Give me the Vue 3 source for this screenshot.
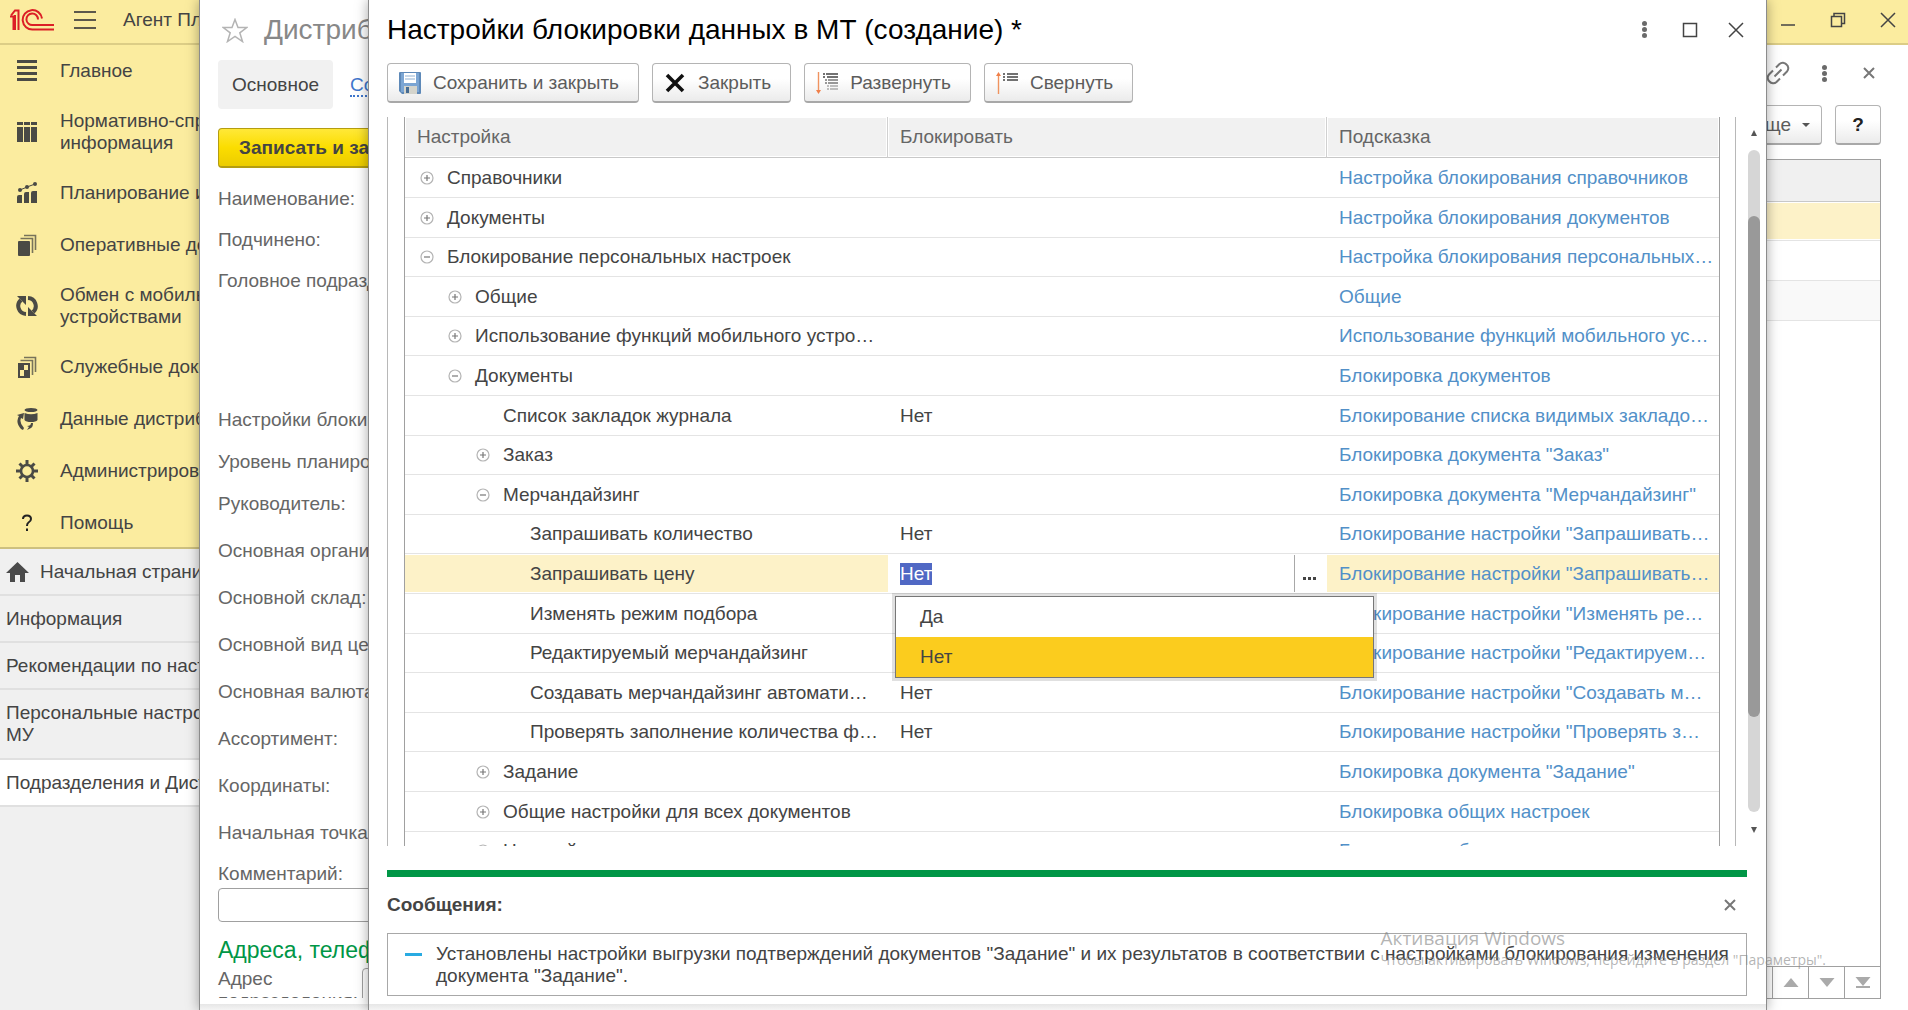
<template>
  <div class="app">
    <header class="titlebar">
      <svg class="logo" viewBox="0 0 44 22" fill="none" stroke="#dc1f26" stroke-width="2">
        <path d="M0 7.500H3.500V21" />
        <path d="M1 6.500L5 1.500H8.500V21M5 21V6" />
        <path d="M32 9.500A9.700 9.700 0 1 0 23 20.500H44" />
        <path d="M28 10.500A5.800 5.800 0 1 0 23 16H44" />
      </svg>
      <button class="burger" aria-label="Меню"><i></i><i></i><i></i></button>
      <span class="app-name">Агент Плюс</span>
      <div class="titlebar-actions">
        <button aria-label="Свернуть окно">
          <svg viewBox="0 0 16 16"><path d="M1 13H15" /></svg>
        </button>
        <button aria-label="Восстановить">
          <svg viewBox="0 0 16 16"><path d="M1.500 4.500H11.500V14.500H1.500ZM4 4V1.500H14.500V11.500H12" /></svg>
        </button>
        <button aria-label="Закрыть приложение">
          <svg viewBox="0 0 16 16"><path d="M1 1L15 15M15 1L1 15" /></svg>
        </button>
      </div>
    </header>

    <div class="workspace">
      <aside class="sidebar">
        <nav class="sections">
          <a v-for="item in sections" :key="item.label" href="#" class="section" :class="{ double: item.double }">
            <svg viewBox="0 0 22 22" class="section-icon" v-html="item.icon"></svg>
            <span>{{ item.label }}</span>
          </a>
        </nav>
        <nav class="open-tabs">
          <a v-for="tab in openTabs" :key="tab.label" href="#" class="open-tab" :class="{ double: tab.double, active: tab.active }">
            <svg v-if="tab.home" viewBox="0 0 23 20" class="home-icon">
              <path d="M11.500 0L23 11H19V20H14V13H9V20H4V11H0Z" />
            </svg>
            <span>{{ tab.label }}</span>
          </a>
        </nav>
      </aside>

      <main class="list-form">
        <div class="list-head">
          <button aria-label="Получить ссылку">
            <svg viewBox="0 0 24 24" class="link-icon">
              <path d="M10 6.500L13.500 3A4.800 4.800 0 0 1 20.500 3.500A4.800 4.800 0 0 1 21 10.500L17 14.500M14 17.500L10.500 21A4.800 4.800 0 0 1 3.500 20.500A4.800 4.800 0 0 1 3 13.500L7 9.500M8.500 15.500L15.500 8.500" />
            </svg>
          </button>
          <button class="dots" aria-label="Дополнительно"><i></i><i></i><i></i></button>
          <button class="close-list" aria-label="Закрыть список">
            <svg viewBox="0 0 12 12" class="small-x"><path d="M1 1L11 11M11 1L1 11" /></svg>
          </button>
        </div>
        <div class="list-tools">
          <button class="btn more">Еще <i class="caret"></i></button>
          <button class="btn help">?</button>
        </div>
        <div class="list-box">
          <div class="list-row list-row-head"></div>
          <div class="list-row current"></div>
          <div class="list-row"></div>
          <div class="list-row even"></div>
        </div>
        <div class="list-nav">
          <button aria-label="Вверх"><svg viewBox="0 0 16 12"><path d="M8 1L15.500 10H0.500Z" /></svg></button>
          <button aria-label="Вниз"><svg viewBox="0 0 16 12"><path d="M8 10L15.500 1H0.500Z" /></svg></button>
          <button aria-label="В конец"><svg viewBox="0 0 16 12"><path d="M8 9L15.500 0H0.500ZM1 9H15V11H1Z" /></svg></button>
        </div>
      </main>
    </div>

    <section class="window element-form">
      <div class="element-body">
        <div class="element-title">
          <svg viewBox="0 0 26 25" class="star">
            <path d="M13 1.500L16 9.500H24.800L17.800 14.800L20.500 23.500L13 18.300L5.500 23.500L8.200 14.800L1.200 9.500H10Z" />
          </svg>
          <h2>Дистрибьютор</h2>
        </div>
        <div class="element-tabs">
          <a href="#" class="element-tab active">Основное</a>
          <a href="#" class="element-tab"><span>Согласования</span></a>
        </div>
        <button class="btn-primary">Записать и закрыть</button>
        <div class="labels short">
          <span v-for="label in headLabels" :key="label">{{ label }}</span>
        </div>
        <div class="labels medium">
          <span v-for="label in settingLabels" :key="label">{{ label }}</span>
        </div>
        <div class="labels tall">
          <span v-for="label in mainLabels" :key="label">{{ label }}</span>
        </div>
        <label class="comment-label" for="comment">Комментарий:</label>
        <input id="comment" class="field" type="text" />
        <h3>Адреса, телефоны</h3>
        <div class="address">
          <label for="address">Адрес подразделения:</label>
          <input id="address" class="field" type="text" />
        </div>
      </div>
    </section>

    <section class="window dialog" role="dialog" aria-labelledby="dialog-title">
      <div class="dialog-head">
        <h1 id="dialog-title">Настройки блокировки данных в МТ (создание) *</h1>
        <div class="dialog-actions">
          <button class="dots" aria-label="Еще действия"><i></i><i></i><i></i></button>
          <button aria-label="Развернуть окно">
            <svg viewBox="0 0 16 16"><path d="M1.500 1.500H14.500V14.500H1.500Z" /></svg>
          </button>
          <button aria-label="Закрыть окно">
            <svg viewBox="0 0 16 16"><path d="M1 1L15 15M15 1L1 15" /></svg>
          </button>
        </div>
      </div>

      <div class="toolbar">
        <button v-for="cmd in commands" :key="cmd.label" class="btn command">
          <svg viewBox="0 0 22 22" v-html="cmd.icon"></svg>
          <span>{{ cmd.label }}</span>
        </button>
      </div>

      <div class="scroll-area">
        <div class="frame">
          <table class="tree">
            <colgroup>
              <col class="col-name" />
              <col class="col-value" />
              <col />
            </colgroup>
            <thead>
              <tr>
                <th>Настройка</th>
                <th>Блокировать</th>
                <th>Подсказка</th>
              </tr>
            </thead>
            <tbody>
              <tr v-for="(row, index) in rows" :key="index" :class="{ selected: row.editing }">
                <td>
                  <div class="name" :class="'level-' + row.level">
                    <button v-if="row.toggle" class="toggle" :aria-label="row.name">
                      <svg viewBox="0 0 14 14">
                        <circle cx="7" cy="7" r="6" />
                        <path :d="row.toggle === 'plus' ? 'M4 7H10M7 4V10' : 'M4 7H10'" />
                      </svg>
                    </button>
                    <span>{{ row.name }}</span>
                  </div>
                </td>
                <td v-if="row.editing" class="editing">
                  <div class="editor">
                    <input ref="valueInput" v-model="row.value" type="text" aria-label="Блокировать" />
                    <button class="choose" aria-label="Выбрать"><i></i><i></i><i></i></button>
                  </div>
                  <ul class="options" role="listbox">
                    <li v-for="option in options" :key="option" role="option" :class="{ chosen: option === row.value }">
                      {{ option }}
                    </li>
                  </ul>
                </td>
                <td v-else>{{ row.value }}</td>
                <td><a href="#">{{ row.hint }}</a></td>
              </tr>
            </tbody>
          </table>
        </div>
        <div class="scrollbar">
          <i class="arrow up"></i>
          <div class="track"><div class="thumb"></div></div>
          <i class="arrow down"></i>
        </div>
      </div>

      <div class="messages">
        <div class="messages-head">
          <strong>Сообщения:</strong>
          <button aria-label="Закрыть сообщения">
            <svg viewBox="0 0 12 12" class="small-x"><path d="M1 1L11 11M11 1L1 11" /></svg>
          </button>
        </div>
        <div class="message">
          <i class="dash"></i>
          <p>
            Установлены настройки выгрузки подтверждений документов "Задание" и их результатов в соответствии с настройками блокирования изменения документа "Задание".
          </p>
        </div>
      </div>
    </section>

    <div class="watermark">
      <p class="watermark-title">Активация Windows</p>
      <p>Чтобы активировать Windows, перейдите в раздел "Параметры".</p>
    </div>
  </div>
</template>

<script setup>
import { onMounted, ref } from 'vue'

const sections = [
  {
    label: 'Главное',
    icon: '<path d="M1 0H21V3H1ZM1 6H21V9H1ZM1 12H21V15H1ZM1 18H21V21H1Z"/>'
  },
  {
    label: 'Нормативно-справочная\nинформация',
    double: true,
    icon: '<path d="M1 1H7V4H1ZM8 1H14V4H8ZM15 1H21V4H15ZM1 6H7V21H1ZM8 6H14V21H8ZM15 6H21V21H15Z"/>'
  },
  {
    label: 'Планирование и анализ',
    icon: '<path d="M1 15Q1 13 3 13H6V21H1ZM8 12Q8 10 10 10H13V21H8ZM15 11Q15 9 17 9H21V21H15Z"/><circle cx="4" cy="8" r="2"/><circle cx="11" cy="5" r="2"/><circle cx="19" cy="2" r="2"/><path d="M4 8L11 5L19 2" stroke="#4a4a45" stroke-width="1"/>'
  },
  {
    label: 'Оперативные документы',
    icon: '<rect x="2" y="7" width="12" height="15" rx="1"/><path d="M4.500 4.500H16.500V19M8 1.500H19.500V16" fill="none" stroke="#77735a" stroke-width="1.600"/>'
  },
  {
    label: 'Обмен с мобильными\nустройствами',
    double: true,
    icon: '<g fill="none" stroke="#4a4a45" stroke-width="4"><path d="M10 19A8 8 0 0 1 5 5"/><path d="M12 3A8 8 0 0 1 17 17"/></g><path d="M1 1H10V10ZM21 21H12V12Z"/>'
  },
  {
    label: 'Служебные документы',
    icon: '<path d="M2 7H14V22H2ZM8 9V14H12V9ZM4 14V20H8V14Z" fill-rule="evenodd"/><path d="M4.500 4.500H16.500V19M8 1.500H19.500V16" fill="none" stroke="#77735a" stroke-width="1.600"/>'
  },
  {
    label: 'Данные дистрибьюторов',
    icon: '<ellipse cx="15" cy="2" rx="6.500" ry="2"/><path d="M8.500 5Q15 7.500 21.500 5V12Q20 14 15 14Q10 14 8.500 12Z"/><path d="M5 21Q-1 14 3 8L1 7L8 5L7 11L5 10Q3 15 8 20L7 22ZM11 22L13 19L11 18Q15 18 15 15H17Q17 19 15 20Z"/>'
  },
  {
    label: 'Администрирование',
    icon: '<circle cx="11" cy="11" r="6" fill="none" stroke="#4a4a45" stroke-width="2.600"/><path d="M11 0V5M11 17V22M0 11H5M17 11H22M3.500 3.500L6.500 6.500M15.500 15.500L18.500 18.500M3.500 18.500L6.500 15.500M15.500 6.500L18.500 3.500" stroke="#4a4a45" stroke-width="3"/>'
  },
  {
    label: 'Помощь',
    icon: '<path d="M7 7Q7 3.500 11 3.500Q15 3.500 15 7Q15 9 12.500 10.500Q11 11.500 11 14" fill="none" stroke="#222" stroke-width="2"/><path d="M10 16.500H12V19H10Z" fill="#222"/>'
  }
]

const openTabs = [
  { label: 'Начальная страница', home: true },
  { label: 'Информация' },
  { label: 'Рекомендации по настройке' },
  { label: 'Персональные настройки\nМУ', double: true },
  { label: 'Подразделения и Дистрибьюторы', active: true }
]

const headLabels = ['Наименование:', 'Подчинено:', 'Головное подразделение:']
const settingLabels = ['Настройки блокировки:', 'Уровень планирования:', 'Руководитель:']
const mainLabels = [
  'Основная организация:',
  'Основной склад:',
  'Основной вид цен:',
  'Основная валюта:',
  'Ассортимент:',
  'Координаты:',
  'Начальная точка:'
]

const commands = [
  {
    label: 'Сохранить и закрыть',
    icon: '<path d="M0 1Q0 0 1 0H21Q22 0 22 1V21Q22 22 21 22H3L0 19Z" fill="#5e89b8"/><path d="M2 1H20V20H2Z" fill="#7ba5d3"/><path d="M5 1H17V11H5Z" fill="#fff"/><path d="M6 4H16M6 7H16" stroke="#8fb0d2" stroke-width="1"/><path d="M5 14H18V22H5Z" fill="#d4d4cc"/><path d="M7 15H10V21H7Z" fill="#456b93"/>'
  },
  {
    label: 'Закрыть',
    icon: '<path d="M3 3L19 19M19 3L3 19" stroke="#111" stroke-width="3.600"/>'
  },
  {
    label: 'Развернуть',
    icon: '<path d="M2.500 0V20" stroke="#f0935f" stroke-width="1.400"/><path d="M0 18H5L2.500 22Z" fill="#f0804a"/><g stroke-width="1.600"><path d="M7 2H9M10 2H22M7 5H9M11 5H22" stroke="#444"/><path d="M9 8H11M12 8H22M9 11H11M12 11H22" stroke="#777"/><path d="M11 14H13M14 14H22M11 17H13M14 17H22" stroke="#aaa"/></g>'
  },
  {
    label: 'Свернуть',
    icon: '<path d="M2.500 2V22" stroke="#f0935f" stroke-width="1.400"/><path d="M0 4H5L2.500 0Z" fill="#f0804a"/><path d="M7 2H9M11 2H22M7 5H9M11 5H22M7 8H9M11 8H22" stroke="#444" stroke-width="1.600"/>'
  }
]

const options = ['Да', 'Нет']

const rows = ref([
  { level: 0, toggle: 'plus', name: 'Справочники', hint: 'Настройка блокирования справочников' },
  { level: 0, toggle: 'plus', name: 'Документы', hint: 'Настройка блокирования документов' },
  { level: 0, toggle: 'minus', name: 'Блокирование персональных настроек', hint: 'Настройка блокирования персональных…' },
  { level: 1, toggle: 'plus', name: 'Общие', hint: 'Общие' },
  { level: 1, toggle: 'plus', name: 'Использование функций мобильного устро…', hint: 'Использование функций мобильного ус…' },
  { level: 1, toggle: 'minus', name: 'Документы', hint: 'Блокировка документов' },
  { level: 2, name: 'Список закладок журнала', value: 'Нет', hint: 'Блокирование списка видимых закладо…' },
  { level: 2, toggle: 'plus', name: 'Заказ', hint: 'Блокировка документа "Заказ"' },
  { level: 2, toggle: 'minus', name: 'Мерчандайзинг', hint: 'Блокировка документа "Мерчандайзинг"' },
  { level: 3, name: 'Запрашивать количество', value: 'Нет', hint: 'Блокирование настройки "Запрашивать…' },
  { level: 3, name: 'Запрашивать цену', value: 'Нет', editing: true, hint: 'Блокирование настройки "Запрашивать…' },
  { level: 3, name: 'Изменять режим подбора', hint: 'Блокирование настройки "Изменять ре…' },
  { level: 3, name: 'Редактируемый мерчандайзинг', hint: 'Блокирование настройки "Редактируем…' },
  { level: 3, name: 'Создавать мерчандайзинг автомати…', value: 'Нет', hint: 'Блокирование настройки "Создавать м…' },
  { level: 3, name: 'Проверять заполнение количества ф…', value: 'Нет', hint: 'Блокирование настройки "Проверять з…' },
  { level: 2, toggle: 'plus', name: 'Задание', hint: 'Блокировка документа "Задание"' },
  { level: 2, toggle: 'plus', name: 'Общие настройки для всех документов', hint: 'Блокировка общих настроек' },
  { level: 2, toggle: 'plus', name: 'Настройки', hint: 'Блокировка общих' }
])

const valueInput = ref([])

onMounted(() => {
  const input = valueInput.value[0]
  input.focus({ preventScroll: true })
  input.select()
})
</script>

<style>
body {
  margin: 0;
  overflow: hidden;
}
</style>

<style scoped>
.app {
  position: relative;
  display: flex;
  flex-direction: column;
  height: 100vh;
  overflow: hidden;
  background: #ffffff;
  color: #444444;
  font-family: 'Liberation Sans', Arial, sans-serif;
  font-size: 19px;
  line-height: 22px;
}

.app * {
  box-sizing: border-box;
}

h1,
h2,
h3,
p,
ul {
  margin: 0;
  padding: 0;
  font-weight: 400;
}

a {
  color: inherit;
  text-decoration: none;
}

button {
  padding: 0;
  border: 0;
  background: none;
  color: inherit;
  font: inherit;
}

svg {
  display: block;
  flex: none;
}

/* main window */
.titlebar {
  display: flex;
  align-items: center;
  flex: none;
  height: 45px;
  padding: 0 12px 3px 10px;
  border-bottom: 2px solid #dccd86;
  background: #fbec9f;
}

.logo {
  width: 44px;
  height: 22px;
}

.burger {
  display: flex;
  flex-direction: column;
  gap: 6px;
  width: 22px;
  margin-left: 20px;
}

.burger i {
  height: 2px;
  background: #5c584b;
}

.app-name {
  margin-left: 27px;
}

.titlebar-actions {
  display: flex;
  gap: 34px;
  margin-left: auto;
}

.titlebar-actions svg,
.dialog-actions svg {
  width: 16px;
  height: 16px;
  fill: none;
  stroke: #444444;
  stroke-width: 1.5;
}

.workspace {
  display: flex;
  flex: 1;
  min-height: 0;
}

.sidebar {
  flex: none;
  width: 260px;
  overflow: hidden;
  background: #f0f0f0;
  white-space: pre;
}

.sections {
  background: #fbec9f;
  box-shadow: inset 0 -2px #cdc07f;
}

.section {
  display: flex;
  align-items: center;
  gap: 22px;
  height: 52px;
  padding-left: 16px;
}

.section.double {
  height: 70px;
}

.section-icon {
  width: 22px;
  height: 22px;
  fill: #4a4a45;
}

.open-tab {
  display: flex;
  align-items: center;
  gap: 11px;
  height: 47px;
  padding-left: 6px;
  border-bottom: 2px solid #e0e0e0;
}

.open-tab.double {
  height: 70px;
}

.open-tab.active {
  background: #ffffff;
}

.home-icon {
  width: 23px;
  height: 20px;
  fill: #4a4a4a;
}

.list-form {
  display: flex;
  flex: 1;
  flex-direction: column;
  padding: 0 27px 11px 20px;
}

.list-head {
  display: flex;
  align-items: center;
  justify-content: flex-end;
  gap: 26px;
  height: 56px;
  padding-right: 6px;
}

.close-list {
  margin-left: 5px;
}

.link-icon {
  width: 24px;
  height: 24px;
  fill: none;
  stroke: #777777;
  stroke-width: 2;
}

.small-x {
  width: 12px;
  height: 12px;
  fill: none;
  stroke: #777777;
  stroke-width: 2;
}

.dots {
  display: flex;
  flex-direction: column;
  align-items: center;
  gap: 1px;
  width: 16px;
}

.dots i {
  width: 5px;
  height: 5px;
  border-radius: 50%;
  background: #6a6a6a;
}

.list-tools {
  display: flex;
  justify-content: flex-end;
  gap: 13px;
  padding: 4px 0 14px;
}

.btn {
  display: flex;
  align-items: center;
  height: 40px;
  border: 1px solid #b4b4b4;
  border-bottom: 2px solid #a8a8a8;
  border-radius: 4px;
  background: linear-gradient(#ffffff 40%, #ebebeb);
  color: #5c5c5c;
}

.more {
  gap: 11px;
  padding: 0 11px;
}

.caret {
  border: 4px solid transparent;
  border-top-color: #555555;
  border-bottom: 0;
}

.help {
  justify-content: center;
  width: 46px;
  color: #222222;
  font-weight: 700;
}

.list-box {
  flex: 1;
  border: 1px solid #a0a0a0;
}

.list-row {
  height: 40px;
  border-bottom: 1px solid #e4e4e4;
}

.list-row-head {
  height: 42px;
  border-bottom-color: #c8c8c8;
  background: #f0f0f0;
}

.list-row.current {
  height: 39px;
  background: #fdf2c8;
  box-shadow: inset 0 1px #ffffff, inset 0 -1px #ffffff;
}

.list-row.even {
  background: #f9f9f9;
}

.list-nav {
  display: flex;
  justify-content: flex-end;
  border: 1px solid #a0a0a0;
  border-top: 0;
}

.list-nav button {
  display: flex;
  align-items: center;
  justify-content: center;
  width: 36px;
  height: 31px;
  border-left: 1px solid #a0a0a0;
}

.list-nav svg {
  width: 16px;
  height: 12px;
  fill: #aaaaaa;
}

/* overlaid windows */
.window {
  position: absolute;
  top: 0;
  bottom: 0;
  border: 1px solid #8c8c8c;
  border-width: 0 1px;
  background: #ffffff;
  box-shadow: 0 0 12px rgba(0, 0, 0, 0.35);
}

.window::after {
  content: '';
  position: absolute;
  right: 0;
  bottom: 0;
  left: 0;
  height: 6px;
  background: linear-gradient(#e6e6e6, #f4f4f4);
}

.element-form {
  left: 199px;
  width: 50%;
}

.element-body {
  display: flex;
  flex-direction: column;
  height: calc(100% - 12px);
  padding-left: 18px;
  overflow: hidden;
  color: #666666;
}

.element-body > * {
  flex: none;
}

.element-title {
  display: flex;
  align-items: center;
  gap: 16px;
  height: 60px;
  padding-left: 4px;
}

.star {
  width: 26px;
  height: 25px;
  fill: none;
  stroke: #b4b4b4;
  stroke-width: 1.5;
}

h1,
h2 {
  font-size: 28px;
  line-height: 32px;
}

h2 {
  color: #888888;
}

.element-tabs {
  display: flex;
}

.element-tab {
  height: 49px;
  padding: 14px;
  border-radius: 4px;
  color: #3f76cc;
}

.element-tab.active {
  background: #f1f1f1;
  color: #444444;
}

.element-tab span {
  margin-left: 3px;
  border-bottom: 2px dotted #3f76cc;
}

.btn-primary {
  height: 40px;
  margin-top: 19px;
  padding: 0 20px;
  align-self: flex-start;
  border: 1px solid #b49d10;
  border-bottom-width: 2px;
  border-radius: 4px;
  background: linear-gradient(#ffe838, #fbdd00 50%, #eccc00);
  color: #444444;
  font-weight: 700;
}

.labels {
  display: flex;
  flex-direction: column;
}

.short {
  margin-top: 20px;
}

.short span {
  height: 41px;
}

.medium {
  margin-top: 98px;
}

.medium span {
  height: 42px;
}

.tall {
  margin-top: 5px;
}

.tall span {
  height: 47px;
}

.comment-label {
  height: 25px;
  margin-top: -6px;
}

.field {
  height: 34px;
  border: 1px solid #a0a0a0;
  border-radius: 4px;
  background: #ffffff;
  font: inherit;
}

h3 {
  margin-top: 14px;
  color: #009646;
  font-size: 23px;
  line-height: 28px;
}

.address {
  display: flex;
  align-items: flex-start;
  gap: 4px;
  padding-top: 4px;
}

.address label {
  width: 140px;
}

.dialog {
  right: 141px;
  left: 368px;
  display: flex;
  flex-direction: column;
  padding-bottom: 14px;
}

.dialog-head {
  display: flex;
  align-items: center;
  justify-content: space-between;
  flex: none;
  height: 59px;
  padding: 0 22px 0 18px;
}

h1 {
  color: #000000;
}

.dialog-actions {
  display: flex;
  align-items: center;
  gap: 30px;
}

.toolbar {
  display: flex;
  gap: 13px;
  flex: none;
  padding: 4px 18px 14px;
}

.command {
  gap: 12px;
  padding: 0 19px 0 11px;
}

.command svg {
  width: 22px;
  height: 22px;
}

.scroll-area {
  display: flex;
  flex: 1;
  gap: 12px;
  min-height: 0;
  padding: 0 6px 0 18px;
}

.frame {
  flex: 1;
  padding: 0 15px 0 16px;
  overflow: hidden;
  border: 1px solid #b8b8b8;
  border-width: 0 1px;
}

.tree {
  width: 100%;
  border: 1px solid #a0a0a0;
  border-width: 0 1px;
  border-spacing: 0;
  table-layout: fixed;
}

.col-name {
  width: 483px;
}

.col-value {
  width: 439px;
}

th,
td {
  height: 40px;
  padding: 0 0 0 12px;
  border-bottom: 1px solid #e4e4e4;
  text-align: left;
  white-space: nowrap;
}

/* the row pitch alternates between 40 and 39 pixels */
tr:nth-child(5n + 3) td,
tr:nth-child(5n) td {
  height: 39px;
}

th {
  height: 41px;
  border-right: 1px solid #d0d0d0;
  border-bottom-color: #c8c8c8;
  background: #f1f1f1;
  box-shadow: inset 0 0 0 1px #ffffff;
  color: #666666;
  font-weight: 400;
}

th:last-child {
  border-right: 0;
}

td a {
  color: #5290c8;
}

.name {
  display: flex;
  align-items: center;
  justify-content: flex-start;
  padding-left: 30px;
}

.level-1 {
  padding-left: 58px;
}

.level-2 {
  padding-left: 86px;
}

.level-3 {
  padding-left: 113px;
}

.toggle {
  margin-right: 13px;
  margin-left: -27px;
}

.toggle svg {
  width: 14px;
  height: 14px;
  fill: none;
  stroke: #b4b4b4;
  stroke-width: 1.2;
}

.toggle path {
  stroke: #777777;
}

.selected td {
  background: #fdf2c8;
  box-shadow: inset 0 1px #ffffff, inset 0 -1px #ffffff;
}

.selected .editing {
  position: relative;
  background: #ffffff;
}

.editor {
  display: flex;
  height: 37px;
}

.editor input {
  flex: 1;
  min-width: 0;
  padding: 0;
  border: 0;
  outline: 0;
  background: none;
  color: #444444;
  font: inherit;
}

.editor input::selection {
  background: #5068c4;
  color: #ffffff;
}

.choose {
  display: flex;
  align-items: center;
  justify-content: center;
  gap: 2px;
  width: 33px;
  padding: 10px 4px 0 0;
  border-left: 1px solid #a8a8a8;
}

.choose i {
  width: 3px;
  height: 3px;
  background: #444444;
}

.options {
  position: absolute;
  z-index: 1;
  top: 42px;
  left: 7px;
  width: calc(100% + 40px);
  border: 1px solid #777777;
  background: #ffffff;
  box-shadow: 0 0 0 3px rgba(0, 0, 0, 0.12);
  list-style: none;
}

.options li {
  height: 40px;
  padding: 9px 24px;
}

.options .chosen {
  background: #fbcc1e;
}

.scrollbar {
  display: flex;
  flex: none;
  flex-direction: column;
  align-items: center;
  width: 12px;
  padding: 13px 0;
}

.arrow {
  border: 3px solid transparent;
}

.arrow.up {
  border-top: 0;
  border-bottom: 6px solid #555555;
}

.arrow.down {
  border-top: 6px solid #555555;
  border-bottom: 0;
}

.track {
  flex: 1;
  width: 12px;
  margin: 14px 0 15px;
  padding-top: 66px;
  border-radius: 6px;
  background: #d6d6d6;
}

.thumb {
  height: 84%;
  border-radius: 6px;
  background: #999999;
}

.messages {
  flex: none;
  margin: 24px 19px 0 18px;
  border-top: 7px solid #009646;
}

.messages-head {
  display: flex;
  align-items: center;
  justify-content: space-between;
  height: 56px;
  padding: 0 11px 0 0;
}

.message {
  display: flex;
  height: 63px;
  padding: 9px 12px 0 17px;
  border: 1px solid #a8a8a8;
}

.dash {
  flex: none;
  width: 17px;
  height: 3px;
  margin: 10px 14px 0 0;
  background: #29abe2;
}

.watermark {
  position: absolute;
  right: 82px;
  bottom: 39px;
  color: rgba(130, 130, 130, 0.6);
  font-family: 'Open Sans', 'Noto Sans', sans-serif;
  font-size: 14px;
  pointer-events: none;
}

.watermark-title {
  font-size: 19px;
}
</style>
